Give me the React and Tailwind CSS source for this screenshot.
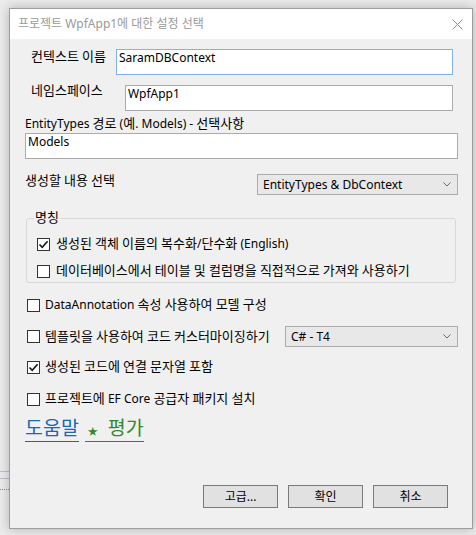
import React from "react";

function K({ children, big }) {
  const parts = String(children).split(/([\uAC00-\uD7A3]+)/);
  return (
    <>
      {parts.map((p, i) =>
        i % 2 === 1 ? (
          <span key={i} className={big ? "text-[19.5px] leading-none" : "text-[13px] leading-none"}>
            {p}
          </span>
        ) : (
          p
        )
      )}
    </>
  );
}

function Check({ checked }) {
  return (
    <span className="flex h-[13px] w-[13px] shrink-0 items-center justify-center border border-[#333333] bg-white">
      {checked && (
        <svg width="11" height="11" viewBox="0 0 11 11">
          <path d="M1.5 5.5 L4.2 8.3 L9.6 2.2" stroke="#1a1a1a" strokeWidth="1.7" fill="none" />
        </svg>
      )}
    </span>
  );
}

function Chevron() {
  return (
    <svg width="8" height="5" viewBox="0 0 8 5" className="shrink-0">
      <path d="M0.5 0.5 L4 4 L7.5 0.5" stroke="#6a6a6a" strokeWidth="1" fill="none" />
    </svg>
  );
}

function Combo({ text, className }) {
  return (
    <div
      className={
        "flex h-[21px] items-center justify-between border border-[#acacac] bg-[#e8e8e8] pl-[5px] pr-[6px] leading-[16px] " +
        className
      }
    >
      <span>{text}</span>
      <Chevron />
    </div>
  );
}

function Button({ children }) {
  return (
    <div className="flex h-[23px] w-[75px] items-center justify-center border border-[#7a7a7a] bg-[#e1e1e1] leading-[16px]">
      {children}
    </div>
  );
}

export default function App() {
  return (
    <div className="relative h-[535px] w-[476px] overflow-hidden bg-[#ebebeb] font-['Noto_Sans','Noto_Sans_CJK_KR',sans-serif] text-[12px] text-black">
      <div className="flex flex-col pt-[471px]">
        <div className="h-px w-[9px] bg-[#bdbdca]" />
        <div className="mt-[6px] h-px w-[9px] bg-[#bdbdca]" />
        <div className="mt-[10px] w-[9px] border-t border-dotted border-[#8a8a8a]" />
      </div>

      <div className="absolute left-[9px] top-[8px] flex h-[521px] w-[464px] flex-col border border-[#9d9d9d] bg-[#f0f0f0] shadow-[0_0_10px_rgba(0,0,0,0.25)]">
        {/* title bar */}
        <div className="flex h-[30px] items-center justify-between bg-white pl-[8px] pr-[9px]">
          <span className="leading-[16px] text-[#9a9a9a]">프로젝트 WpfApp1에 대한 설정 선택</span>
          <svg width="11" height="11" viewBox="0 0 11 11">
            <path d="M0.5 0.5 L10.5 10.5 M10.5 0.5 L0.5 10.5" stroke="#8a8a8a" strokeWidth="1" />
          </svg>
        </div>

        {/* body */}
        <div className="flex flex-1 flex-col">
          <div className="mt-[10px] flex items-start pl-[21px]">
            <span className="w-[85px] leading-[16px]"><K>컨텍스트 이름</K></span>
            <div className="h-[26px] w-[337px] border border-[#7eb4ea] bg-white px-[2px] leading-[16px]">
              SaramDBContext
            </div>
          </div>

          <div className="mt-[10px] flex items-start pl-[21px]">
            <span className="-mt-[2px] w-[94px] leading-[16px]"><K>네임스페이스</K></span>
            <div className="h-[26px] w-[328px] border border-[#ababab] bg-white px-[2px] leading-[16px]">
              WpfApp1
            </div>
          </div>

          <span className="ml-[15px] mt-[5px] leading-[16px]"><K>EntityTypes 경로 (예. Models) - 선택사항</K></span>
          <div className="ml-[15px] mt-[1px] h-[26px] w-[433px] border border-[#ababab] bg-white px-[2px] leading-[16px]">
            Models
          </div>

          <div className="mt-[14px] flex items-start">
            <span className="ml-[15px] leading-[16px]"><K>생성할 내용 선택</K></span>
            <Combo text="EntityTypes & DbContext" className="ml-auto mr-[14px] mt-[1px] w-[201px]" />
          </div>

          <fieldset className="ml-[16px] mt-[15px] w-[430px] rounded-[3px] border border-[#d8d8d8] pb-[3px] pl-[7px]">
            <legend className="px-[1px] leading-[16px]"><K>명칭</K></legend>
            <div className="ml-[3px] mt-[10px] flex items-center gap-[6px] leading-[16px]">
              <Check checked />
              <span><K>생성된 객체 이름의 복수화/단수화 (English)</K></span>
            </div>
            <div className="ml-[3px] mt-[11px] flex items-center gap-[6px] leading-[16px]">
              <Check />
              <span><K>데이터베이스에서 테이블 및 컬럼명을 직접적으로 가져와 사용하기</K></span>
            </div>
          </fieldset>

          <div className="ml-[17px] mt-[14px] flex items-center gap-[5px] leading-[16px]">
            <Check />
            <span><K>DataAnnotation 속성 사용하여 모델 구성</K></span>
          </div>

          <div className="ml-[17px] mt-[13px] flex items-center leading-[16px]">
            <Check />
            <span className="ml-[5px]"><K>템플릿을 사용하여 코드 커스터마이징하기</K></span>
            <Combo text="C# - T4" className="ml-auto mr-[14px] w-[173px]" />
          </div>

          <div className="ml-[17px] mt-[12px] flex items-center gap-[5px] leading-[16px]">
            <Check checked />
            <span><K>생성된 코드에 연결 문자열 포함</K></span>
          </div>

          <div className="ml-[17px] mt-[16px] flex items-center gap-[5px] leading-[16px]">
            <Check />
            <span><K>프로젝트에 EF Core 공급자 패키지 설치</K></span>
          </div>

          <div className="ml-[15px] mt-[9px] flex items-start gap-[6px] text-[18px] leading-[24px]">
            <span className="border-b border-[#1a66b8] pb-[1px] text-[#1a66b8]"><K big>도움말</K></span>
            <span className="flex items-center border-b border-[#2f8a2a] pb-[1px] text-[#2f8a2a]">
              <span className="ml-[3px] mt-[6px] text-[10px] leading-[12px]">★</span>
              <span className="ml-[10px]"><K big>평가</K></span>
            </span>
          </div>

          <div className="mt-auto flex justify-end gap-[10px] pb-[20px] pr-[24px]">
            <Button>고급...</Button>
            <Button>확인</Button>
            <Button>취소</Button>
          </div>
        </div>
      </div>
    </div>
  );
}
